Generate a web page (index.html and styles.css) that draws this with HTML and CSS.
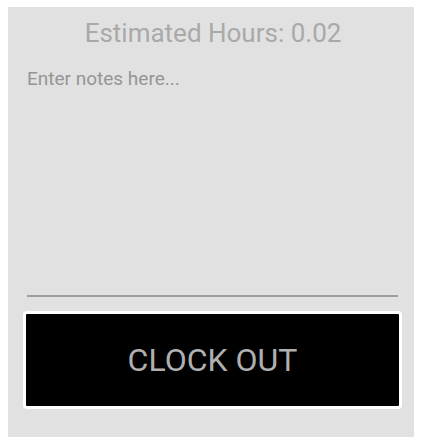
FILE: index.html
```html
<!DOCTYPE html>
<html>
<head>
<meta charset="utf-8">
<link rel="stylesheet" href="styles.css">
</head>
<body>
<div class="panel">
  <div class="title">Estimated Hours: 0.02</div>
  <div class="notes">Enter notes here...</div>
  <div class="btn">CLOCK OUT</div>
</div>
</body>
</html>
```
FILE: styles.css
```css
html, body { margin: 0; padding: 0; background: #ffffff; }
body { font-family: Roboto, "Liberation Sans", sans-serif; }
.panel {
  margin: 7px 0 0 8px;
  width: 406px;
  height: 430px;
  box-sizing: border-box;
  background: #e1e1e1;
  padding-top: 10px;
  display: flex;
  flex-direction: column;
}
.title {
  font-size: 26px;
  line-height: 33px;
  text-align: center;
  color: #a9a9a9;
  padding-left: 4px;
}
.notes {
  margin: 0 16px 0 19px;
  height: 247px;
  box-sizing: border-box;
  padding-top: 18px;
  border-bottom: 2px solid #9e9e9e;
  font-size: 19px;
  line-height: 21px;
  color: #959595;
}
.btn {
  margin: 14px 12px 0 15px;
  height: 98px;
  box-sizing: border-box;
  border: 3px solid #ffffff;
  border-radius: 4px;
  background: #000000;
  display: flex;
  align-items: center;
  justify-content: center;
  font-size: 32px;
  color: #b0b0b0;
}
```
